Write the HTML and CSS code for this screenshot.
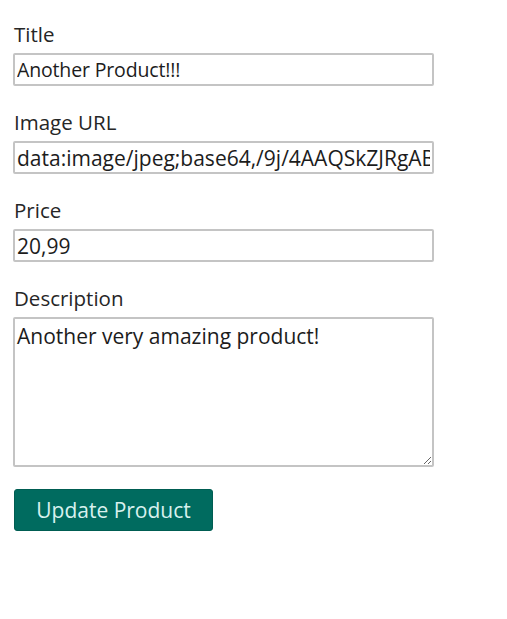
FILE: index.html
```html
<!DOCTYPE html>
<html lang="en">
<head>
<meta charset="utf-8">
<title>Edit Product</title>
<link rel="stylesheet" href="styles.css">
</head>
<body>
<main class="page">
  <form class="product-form">
    <div class="form-control">
      <label for="title">Title</label>
      <input class="input-tight" type="text" id="title" value="Another Product!!!">
    </div>
    <div class="form-control">
      <label for="imageUrl">Image URL</label>
      <input type="text" id="imageUrl" value="data:image/jpeg;base64,/9j/4AAQSkZJRgABAQAAAQABAAD">
    </div>
    <div class="form-control">
      <label for="price">Price</label>
      <input type="text" id="price" value="20,99">
    </div>
    <div class="form-control">
      <label for="description">Description</label>
      <textarea id="description" rows="5">Another very amazing product!</textarea>
    </div>
    <button class="btn" type="submit">Update Product</button>
  </form>
</main>
</body>
</html>
```
FILE: styles.css
```css
* { box-sizing: border-box; }
body {
  margin: 0;
  font-family: "Open Sans", sans-serif;
  color: #222;
  background: #fff;
}
.page {
  padding: 22px 0 0 13px;
}
.product-form {
  width: 421px;
}
.form-control {
  display: flex;
  flex-direction: column;
  margin-bottom: 24px;
}
.form-control label {
  font-size: 20.5px;
  line-height: 24px;
  margin-bottom: 7px;
  padding-left: 1px;
  color: #262626;
}
.form-control input,
.form-control textarea {
  font-family: "Open Sans", sans-serif;
  font-size: 21px;
  color: #1c1c1c;
  border: 2px solid #c4c4c4;
  border-radius: 2px;
  padding: 0 2px;
  width: 100%;
  outline: none;
}
.form-control input {
  height: 33px;
}
.form-control .input-tight {
  font-size: 19.5px;
  letter-spacing: -0.15px;
}
.form-control textarea {
  height: 150px;
  padding: 3px 2px;
  line-height: 28px;
  resize: vertical;
}
.btn {
  font-family: "Open Sans", sans-serif;
  font-size: 21px;
  background: #006b5f;
  color: #d8f1ee;
  border: 1px solid #005d52;
  border-radius: 3px;
  width: 199px;
  height: 42px;
  margin-top: -2px;
  margin-left: 1px;
  cursor: pointer;
}
```
